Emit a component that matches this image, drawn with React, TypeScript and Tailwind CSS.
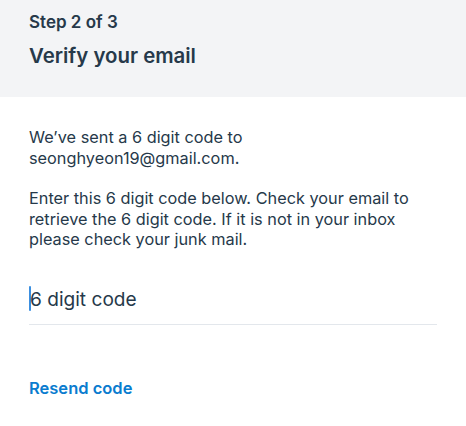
import React from "react";

export default function App() {
  return (
    <div className="w-[466px] h-[426px] bg-white text-[#26394a]" style={{ fontFamily: "Inter, 'Noto Sans', sans-serif" }}>
      <div className="bg-[#f3f4f6] h-[97px] px-[29px] pt-[11px]">
        <div className="text-[17px] font-semibold leading-[22px]">Step 2 of 3</div>
        <div className="text-[20.4px] font-semibold leading-[26px] mt-[10px]">Verify your email</div>
      </div>
      <div className="px-[29px] pt-[30px]">
        <p className="text-[16.3px] leading-[20.5px]">
          We’ve sent a 6 digit code to
          <br />
          seonghyeon19@gmail.com.
        </p>
        <p className="text-[16.3px] leading-[20.5px] mt-[20px] pr-[20px]">
          Enter this 6 digit code below. Check your email to retrieve the 6 digit code. If it is not in your inbox please check your junk mail.
        </p>
        <div className="mt-[36px] w-[408px] border-b border-[#e3e7ec] pb-[12px] flex items-center">
          <span className="w-[2px] h-[25px] bg-[#3b8fe0] rounded-sm mr-[-1px]" />
          <span className="text-[19.1px] leading-[26px]">6 digit code</span>
        </div>
        <div className="mt-[51px] text-[16.5px] font-semibold text-[#0a7ccf]">Resend code</div>
      </div>
    </div>
  );
}
